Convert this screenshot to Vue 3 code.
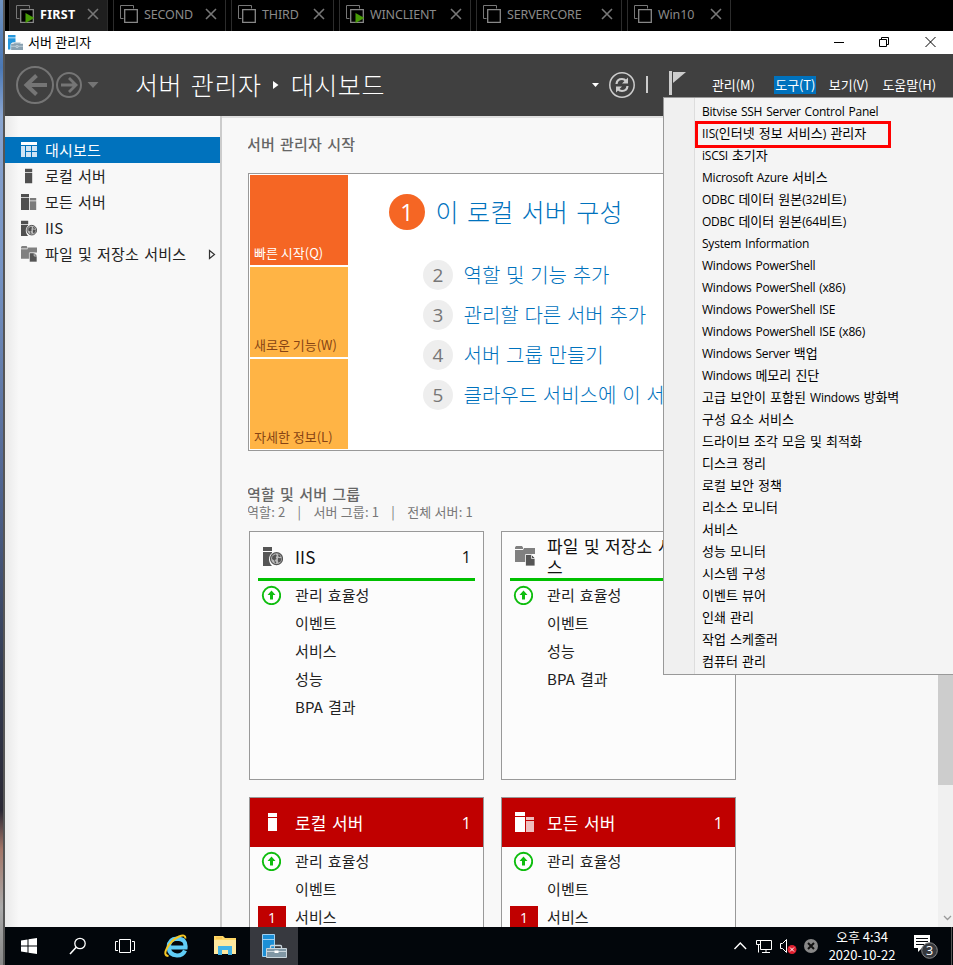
<script setup>
const tabs = [
  { name: 'FIRST', width: 99, running: true, active: true },
  { name: 'SECOND', width: 113 },
  { name: 'THIRD', width: 103 },
  { name: 'WINCLIENT', width: 132, running: true },
  { name: 'SERVERCORE', width: 146 },
  { name: 'Win10', width: 104 },
]
const nav = [
  { icon: 'dashboard', label: '대시보드', active: true },
  { icon: 'server', label: '로컬 서버' },
  { icon: 'servers', label: '모든 서버' },
  { icon: 'iis', label: 'IIS' },
  { icon: 'files', label: '파일 및 저장소 서비스', more: true },
]
const menus = ['관리(M)', '도구(T)', '보기(V)', '도움말(H)']
const tiles = ['빠른 시작(Q)', '새로운 기능(W)', '자세한 정보(L)']
const steps = ['역할 및 기능 추가', '관리할 다른 서버 추가', '서버 그룹 만들기', '클라우드 서비스에 이 서버 연결']
const cards = [
  { icon: 'iis', title: 'IIS', rows: ['관리 효율성', '이벤트', '서비스', '성능', 'BPA 결과'] },
  { icon: 'files', title: '파일 및 저장소 서비스', rows: ['관리 효율성', '이벤트', '성능', 'BPA 결과'] },
  { icon: 'server', title: '로컬 서버', alert: true, rows: ['관리 효율성', '이벤트', '서비스'] },
  { icon: 'servers', title: '모든 서버', alert: true, rows: ['관리 효율성', '이벤트', '서비스'] },
]
// Splits a label into Latin and Hangul runs so each can use its own face.
const runs = (label) =>
  label.split(/([A-Za-z0-9()][A-Za-z0-9() ]*)/).filter(Boolean).map((text) => ({ text, latin: /^[A-Za-z0-9()]/.test(text) }))
const tools = [
  'Bitvise SSH Server Control Panel', 'IIS(인터넷 정보 서비스) 관리자', 'iSCSI 초기자',
  'Microsoft Azure 서비스', 'ODBC 데이터 원본(32비트)', 'ODBC 데이터 원본(64비트)',
  'System Information', 'Windows PowerShell', 'Windows PowerShell (x86)',
  'Windows PowerShell ISE', 'Windows PowerShell ISE (x86)', 'Windows Server 백업',
  'Windows 메모리 진단', '고급 보안이 포함된 Windows 방화벽', '구성 요소 서비스',
  '드라이브 조각 모음 및 최적화', '디스크 정리', '로컬 보안 정책', '리소스 모니터', '서비스',
  '성능 모니터', '시스템 구성', '이벤트 뷰어', '인쇄 관리', '작업 스케줄러', '컴퓨터 관리',
]
</script>

<template>
  <svg class="defs" width="0" height="0">
    <symbol id="i-dashboard" viewBox="0 0 16 16">
      <path d="M0 0h16v3H0z" fill="#fff" />
      <path d="M0 4h4v11H0zM5 4h5v5H5zM11 4h5v5h-5zM5 10h5v5H5zM11 10h5v5h-5z" fill="#cfe4f4" />
    </symbol>
    <symbol id="i-server" viewBox="0 0 20 20">
      <path d="M5 1h9v4H5zM5 6h9v13H5z" fill="currentColor" />
    </symbol>
    <symbol id="i-servers" viewBox="0 0 20 20">
      <path d="M0 0h10v4H0zM0 5h10v15H0z" fill="currentColor" />
      <path d="M11 5h8v3h-8zM11 9h8v11h-8z" fill="currentColor" opacity=".74" />
    </symbol>
    <symbol id="i-iis" viewBox="0 0 20 20">
      <path d="M0 1h9v4H0zM0 6h9v1c-4 3-4 9 0 13H0z" fill="currentColor" />
      <circle cx="13.5" cy="12.7" r="6" fill="#bbb" stroke="currentColor" stroke-width="1.2" />
      <path d="M9.3 10.2l3.2-2 1.3 1.4-1 2 .8 1.3-1.8 1.2 1.6 3-1.5.3-.6-3-2.3-1.4zM15.6 8.1l2.3 2.4-2 .7-.8-1.7zM15 12l3.6.2-1 3.2-2.2 1.4-.6-2.4z" fill="currentColor" />
    </symbol>
    <symbol id="i-files" viewBox="0 0 20 20">
      <path d="M0 1.5L1 0h6l1 1.500V3H0zM0 4h8l1-2h11v6h-9v8H0z" fill="#808080" />
      <path d="M10.500 8.500h6L20 12v8h-9.500z" fill="#555" stroke="#fafafa" stroke-width=".8" />
      <path d="M16.500 9v3.500H20" fill="none" stroke="#eee" stroke-width=".8" />
    </symbol>
    <symbol id="i-toolbox" viewBox="0 0 24 24">
      <path d="M0 0h12v4H0zM0 5h12v7H7q-3 1-3 4v7H0z" fill="#2597dc" />
      <path d="M5 14h19v10H5z" fill="#88a0b0" /><path d="M5 18h19" stroke="#dfe8ee" />
      <path d="M9 14v-2h11v2M13 17h3v3h-3z" fill="#88a0b0" stroke="#d8e4ea" />
    </symbol>
  </svg>

  <div class="screen">
    <div class="wallpaper"></div>
    <div class="console">
      <div class="tabs">
        <div v-for="t in tabs" :key="t.name" class="tab" :class="{ active: t.active }" :style="{ width: t.width + 'px' }">
          <svg width="18" height="18" viewBox="0 0 18 18">
            <path d="M3.5 13.5h-3v-13h13v3" fill="none" stroke="#777" />
            <path d="M4.7 4.7h12.6v12.6H4.7z" fill="#000" stroke="#888" stroke-width="1.3" />
            <path v-if="t.running" d="M9.5 8L18.5 13L9.5 18z" fill="#489c08" />
          </svg>
          <span>{{ t.name }}</span>
          <svg class="x" width="12" height="12" viewBox="0 0 12 12"><path d="M1 1l10 10M11 1L1 11" stroke="#777" stroke-width="1.6" /></svg>
        </div>
      </div>

      <div class="titlebar">
        <svg width="15" height="15"><use href="#i-toolbox" /></svg>
        <span>서버 관리자</span>
        <svg class="win" width="110" height="14" viewBox="0 0 110 14" fill="none" stroke="#000">
          <path d="M1 7.5h10M46.5 4.5h7v7h-7zM48.5 4.5v-2h7v7h-2M92.5 2l10 10M102.5 2l-10 10" />
        </svg>
      </div>

      <div class="header">
        <svg class="arrows" width="84" height="40" viewBox="0 0 84 40" fill="none" stroke="#757575">
          <circle cx="19" cy="20" r="18" stroke-width="2" /><circle cx="53" cy="20" r="12" stroke-width="2" />
          <path d="M31 20H11M20.500 10.500L10.500 20l10 9.500" stroke-width="4" />
          <path d="M45 20h14M53 13l7 7-7 7" stroke-width="2.800" />
          <path d="M71.500 17h11l-5.500 6z" fill="#757575" stroke="none" />
        </svg>
        <div class="crumb">
          <span>서버 관리자</span>
          <svg width="6" height="8" viewBox="0 0 6 8"><path d="M0 0l5.500 4L0 8z" fill="#fff" /></svg>
          <span>대시보드</span>
        </div>
        <svg class="status" width="98" height="40" viewBox="0 0 98 40" fill="none">
          <path d="M1 18h7l-3.500 4z" fill="#fff" />
          <circle cx="31" cy="20" r="12.200" stroke="#ccc" stroke-width="1.500" />
          <path d="M25.500 19q.5-5 5.500-5 2.500 0 4 2M36.500 21q-.5 5-5.500 5-2.500 0-4-2" stroke="#ccc" stroke-width="2.200" />
          <path d="M37 12.500v6h-6zM25 27.500v-6h6z" fill="#ccc" />
          <path d="M56 11v17" stroke="#ccc" stroke-width="2" />
          <path d="M78 6h3v24h-3z" fill="#ccc" /><path d="M82 7h13L82 18z" fill="#ccc" />
        </svg>
        <div class="menubar">
          <span v-for="(m, i) in menus" :key="m" :class="{ open: i === 1 }">{{ m }}</span>
        </div>
      </div>

      <div class="body">
        <div class="sidebar">
          <div v-for="n in nav" :key="n.label" class="nav" :class="{ active: n.active }">
            <svg width="16" height="16"><use :href="'#i-' + n.icon" /></svg>
            <span>{{ n.label }}</span>
            <svg v-if="n.more" class="more" width="8" height="11" viewBox="0 0 8 11"><path d="M1.500 1.500l5 4-5 4z" fill="none" stroke="#333" stroke-width="1.200" /></svg>
          </div>
        </div>

        <div class="content">
          <h2>서버 관리자 시작</h2>
          <div class="welcome">
            <div class="tiles">
              <div v-for="t in tiles" :key="t" class="tile">{{ t }}</div>
            </div>
            <div class="steps">
              <div class="step first"><b>1</b><span>이 로컬 서버 구성</span></div>
              <div v-for="(s, i) in steps" :key="s" class="step"><b>{{ i + 2 }}</b><span>{{ s }}</span></div>
            </div>
          </div>
          <h2 class="groups">역할 및 서버 그룹</h2>
          <div class="counts"><span>역할: 2</span><i>|</i><span>서버 그룹: 1</span><i>|</i><span>전체 서버: 1</span></div>
          <div class="cards">
            <div v-for="c in cards" :key="c.title" class="card" :class="{ alert: c.alert }">
              <div class="head">
                <svg width="20" height="20"><use :href="'#i-' + c.icon" /></svg>
                <span>{{ c.title }}</span><em>1</em>
              </div>
              <div v-for="(r, i) in c.rows" :key="r" class="row">
                <div class="mark">
                  <svg v-if="i === 0" width="20" height="20" viewBox="0 0 20 20">
                    <circle cx="10.500" cy="10.500" r="8.700" fill="#fff" stroke="#0ebd0e" stroke-width="1.900" />
                    <path d="M10.500 5.500l4 4.500H12v4.500H9V10H6.500z" fill="#0ebd0e" />
                  </svg>
                  <b v-else-if="c.alert && i === 2">1</b>
                </div>
                <span>{{ r }}</span>
              </div>
            </div>
          </div>
        </div>

        <div class="scroll">
          <div class="thumb"></div>
          <svg width="9" height="6" viewBox="0 0 9 6"><path d="M1 1l3.500 3.500L8 1" fill="none" stroke="#999" stroke-width="1.300" /></svg>
        </div>
      </div>

      <div class="taskbar">
        <svg class="start" width="16" height="16" viewBox="0 0 16 16"><path d="M0 2.500l6.500-1v6H0zM7.500 1.300L16 0v7.500H7.500zM0 8.500h6.500v6L0 13.500zM7.500 8.500H16V16l-8.500-1.200z" fill="#fff" /></svg>
        <svg class="search" width="18" height="18" viewBox="0 0 18 18" fill="none" stroke="#fff"><circle cx="11" cy="6.500" r="5.200" stroke-width="1.300" /><path d="M7.200 10.300L1 17" stroke-width="1.600" /></svg>
        <svg class="view" width="20" height="14" viewBox="0 0 20 14" fill="none" stroke="#fff"><path d="M4.500.5h11v13h-11zM3 2.500H.5v9H3M17 2.500h2.500v9H17" /></svg>
        <svg class="ie" width="24" height="24" viewBox="0 0 24 24" fill="none">
          <path d="M6 13.500h15.500q.8-8.800-8.500-8.800-8 .3-8.300 8.500.4 8 8.300 8.300 6 0 8-5" stroke="#60ccf5" stroke-width="4.200" />
          <path d="M4.500 22q-5.500-.5-1.500-8Q7.500 6 15 2.500q6.500-2.800 6.500 2" stroke="#f5c725" stroke-width="2" />
        </svg>
        <svg class="folder" width="22" height="20" viewBox="0 0 22 20">
          <path d="M0 0h9l2 2h11v16H0z" fill="#ffd766" /><path d="M0 4h22v14H0z" fill="#ffe9a0" />
          <path d="M4 10h14v9h-4v-5H8v5H4z" fill="#41b3e8" /><path d="M2 2h6" stroke="#f2b544" />
        </svg>
        <div class="app">
          <svg width="25" height="25" viewBox="0 0 25 25">
            <path d="M.5.500h12v22H.5z" fill="#1c8fd6" stroke="#9fd0f0" />
            <path d="M1 5.500h11" stroke="#9fd0f0" />
            <path d="M8.500 14v-1.500q0-1 1-1h9q1 0 1 1V14" fill="none" stroke="#c9d5dc" stroke-width="1.300" />
            <path d="M4.500 14.500h20v9h-20z" fill="#8097a5" stroke="#c9d5dc" />
            <path d="M5 17.500h19" stroke="#c9d5dc" /><path d="M12.500 16.500h4v2.500h-4z" fill="#fff" />
          </svg>
        </div>
        <div class="tray">
          <svg width="88" height="20" viewBox="0 0 88 20" fill="none" stroke="#fff">
            <path d="M2.500 13l5.800-6 5.800 6" stroke-width="1.400" />
            <path d="M28 4.500h11.500v9H28.500V8M34 14v2.500M30 16.500h8M24.500 4.500h4v4h-4zM26.500 8.500v8" />
            <path d="M48.500 7.500h2l4-4v13l-4-4h-2z" />
            <circle cx="60" cy="13.500" r="4.500" fill="#e02030" stroke="none" /><path d="M58 11.500l4 4M62 11.500l-4 4" />
            <circle cx="79" cy="10" r="7" fill="#888" stroke="none" /><path d="M76 7l6 6M82 7l-6 6" stroke="#111" stroke-width="2" />
          </svg>
          <div class="clock"><span>오후 4:34</span><span>2020-10-22</span></div>
          <svg class="note" width="26" height="26" viewBox="0 0 26 26">
            <path d="M1 1h16v13H9l-4 4v-4H1z" fill="#fff" /><path d="M3 4.500h12M3 7.500h12M3 10.500h8" stroke="#05080d" />
            <circle cx="16.500" cy="16.500" r="7.800" fill="#35383d" stroke="#888" />
            <text x="16.500" y="21" text-anchor="middle" fill="#fff" font-size="12.500">3</text>
          </svg>
          <div class="peek"></div>
        </div>
      </div>
    </div>

    <div class="dropdown">
      <div v-for="(t, i) in tools" :key="t" class="item" :class="{ marked: i === 1 }">
        <span v-for="(r, k) in runs(t)" :key="k" :class="{ latin: r.latin }">{{ r.text }}</span>
      </div>
    </div>
  </div>
</template>

<style>
body { margin: 0; overflow: hidden; background: #000; }
</style>

<style scoped>
.defs { position: absolute; }
svg { display: block; flex: none; }
.screen { position: relative; display: flex; width: 953px; height: 965px; overflow: hidden; font-family: "Noto Sans CJK KR", sans-serif; font-size: 13px; color: #222; white-space: nowrap; }
.wallpaper { box-sizing: border-box; width: 5px; border-right: 2px solid #555; background: linear-gradient(#6f92c0, #4b78b4 7%, #8aa5cf 12%, #7593c4 28%, #506591 50%, #333b50 70%, #2b2935 84%, #a37668 88%, #aaa 94%, #888); }
.console { display: flex; flex-direction: column; width: 948px; }

.tabs { box-sizing: border-box; display: flex; gap: 5px; height: 31px; padding-left: 4px; background: #000; }
.tab { box-sizing: border-box; display: flex; align-items: center; height: 31px; padding: 0 8px 3px 6px; border: solid #2c2c2c; border-width: 0 1px; color: #8a8a8a; font: 12.5px "Noto Sans", sans-serif; }
.tab span { flex: 1; margin-left: 6px; letter-spacing: -.15px; }
.tab.active { background: #1f1f1f; color: #fff; }
.tab.active span { font-weight: 700; letter-spacing: .3px; }

.titlebar { display: flex; align-items: center; height: 23px; padding-left: 3px; background: #fff; color: #000; }
.titlebar span { flex: 1; margin: 0 0 2px 5px; letter-spacing: .1px; }
.titlebar .win { margin: 0 10px 2px 0; }

.header { display: flex; height: 62px; background: #404040; color: #fff; }
.arrows { margin: 11px 0 0 11px; }
.crumb { display: flex; align-items: center; box-sizing: border-box; width: 489px; padding-left: 35px; height: 60px; font-size: 25px; font-weight: 300; letter-spacing: .6px; word-spacing: 2.5px; }
.crumb svg { margin: 2px 12px 0 11px; }
.status { margin: 11px 0 0 2px; }
.menubar { display: flex; padding: 22px 0 0 23px; letter-spacing: -.1px; }
.menubar span { height: 18px; line-height: 18px; margin-right: 14px; }
.menubar span:first-child { margin-right: 19.5px; }
.menubar .open { padding: 0 1px; margin-right: 12.5px; background: #0072bd; }

.body { display: flex; height: 811px; background: #f8f8f8; box-shadow: inset 0 2px #e0e0e0; overflow: hidden; }
.sidebar { box-sizing: border-box; width: 217px; padding-top: 21px; border-right: 2px solid #ccc; background: linear-gradient(90deg, #e9e9e9, #f8f8f8 14px); }
.nav { display: flex; align-items: center; height: 26px; padding-left: 16px; font-size: 15px; letter-spacing: .2px; word-spacing: 1.5px; color: #505050; line-height: 26px; }
.nav span { flex: 1; margin-left: 8px; color: #222; }
.nav .more { margin-right: 4px; }
.nav.active { background: #0072bd; }
.nav.active span { color: #fff; }

.content { width: 490px; margin-left: 26px; flex: none; overflow: hidden; }
h2 { margin: 18px 0 0 -1px; height: 20px; line-height: 20px; font-size: 15px; font-weight: 500; color: #666; letter-spacing: .2px; word-spacing: 1.5px; }
.welcome { box-sizing: border-box; display: flex; width: 690px; height: 278px; margin-top: 19px; padding: 1px; border: 1px solid #999; background: #fff; }
.tiles { display: flex; flex-direction: column; gap: 2px; }
.tile { box-sizing: border-box; width: 98px; height: 90px; padding: 68px 0 0 4px; line-height: 20px; background: #ffb445; color: #874414; }
.tile:first-child { background: #f56624; color: #fff; }
.steps { padding: 19px 0 0 75px; }
.step { display: flex; align-items: center; height: 30px; margin-bottom: 10px; font-size: 20px; font-weight: 300; color: #0072bd; word-spacing: 1.3px; }
.step b { width: 30px; height: 30px; margin-right: 10.5px; border-radius: 50%; background: #eee; color: #777; font: 400 19px/30px "Open Sans", sans-serif; text-align: center; }
.step span { height: 30px; line-height: 29px; }
.step.first { height: 36px; margin: 0 0 30px -34px; font-size: 25px; letter-spacing: .2px; word-spacing: 2.5px; }
.step.first b { width: 36px; height: 36px; line-height: 36px; background: #f56624; color: #fff; font-size: 23px; }
.groups { height: 18px; line-height: 18px; margin-top: 34px; }
.counts { display: flex; height: 18px; line-height: 18px; margin-left: -1px; color: #777; letter-spacing: .15px; }
.counts i { width: 28px; text-align: center; font-style: normal; }
.cards { display: grid; grid-template-columns: 235px 235px; grid-auto-rows: 249px; gap: 17px; margin: 10px 0 0 1px; }
.card { box-sizing: border-box; border: 1px solid #999; background: #fcfcfc; }
.head { box-sizing: border-box; display: flex; align-items: center; height: 49px; margin: 0 8px; padding: 2px 4px 0 5px; border-bottom: 3px solid #00c000; font-size: 17px; color: #555; }
.head span { width: 148px; margin-left: 12px; color: #111; line-height: 21px; letter-spacing: .1px; white-space: normal; word-break: break-all; word-spacing: 1.5px; }
.head em { margin: 1px 0 0 auto; font: 16px "Open Sans", sans-serif; color: #111; }
.alert .head { margin: 0; padding: 2px 12px 0 13px; border-color: #c00000; background: #c00000; color: #fff; }
.alert .head span, .alert .head em { color: #fff; }
.row { display: flex; align-items: center; height: 28px; padding-left: 8px; font-size: 15px; letter-spacing: .1px; word-spacing: 1.5px; line-height: 28px; }
.mark { width: 37px; }
.mark svg { margin-left: 3px; }
.mark b { display: block; width: 28px; height: 22px; background: #c00000; color: #fff; text-align: center; font: 400 14px/24px "Open Sans", sans-serif; }

.scroll { display: flex; flex-direction: column; justify-content: space-between; align-items: center; width: 15px; margin-left: 200px; flex: none; background: #f0f0f0; }
.thumb { width: 15px; height: 530px; margin-top: 139px; background: #cdcdcd; }
.scroll svg { margin: 0 0 6px 3px; }

.taskbar { display: flex; align-items: center; height: 38px; background: #02060b; color: #fff; }
.start { margin-left: 16px; }
.search { margin-left: 32px; }
.view { margin-left: 28px; }
.ie { margin: 0 0 1px 29px; }
.folder { margin-left: 26px; }
.app { display: flex; align-items: center; justify-content: center; width: 48px; height: 38px; margin-left: 14px; background: #37393f; }
.tray { display: flex; flex: 1; justify-content: flex-end; align-items: center; height: 38px; }
.clock { display: flex; flex-direction: column; align-items: center; width: 76px; margin-left: 4px; font-size: 13px; line-height: 18px; }
.note { margin: 0 12px 0 13px; padding-top: 1px; font-family: "Open Sans", sans-serif; }
.peek { width: 1px; height: 38px; margin-right: 1px; background: #555; }

.dropdown { position: absolute; left: 663px; top: 97px; box-sizing: border-box; width: 300px; height: 578px; padding: 2px 0 0 31px; border: 1px solid #999; background: linear-gradient(90deg, #f0f0f0 30px, #ddd 30px, #ddd 31px, #f4f4f4 31px); color: #000; }
.item { box-sizing: border-box; display: flex; height: 22px; padding-left: 7px; line-height: 22px; white-space: pre; word-spacing: 1.2px; }
.item .latin { font: 12px/24px "Open Sans", "Noto Sans CJK KR", sans-serif; letter-spacing: -.22px; word-spacing: 1px; }
.item.marked { width: 196px; height: 27px; margin: -1px 0 -4px; padding-left: 4px; border: 3px solid #f00; line-height: 18px; }
.item.marked .latin { line-height: 19px; letter-spacing: 0; }
</style>
